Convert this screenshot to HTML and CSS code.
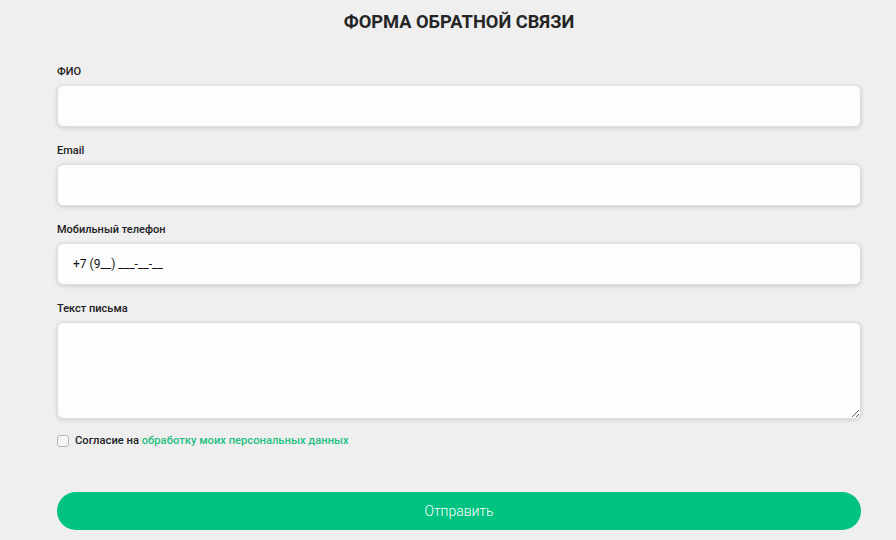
FILE: index.html
```html
<!DOCTYPE html>
<html lang="ru">
<head>
<meta charset="utf-8">
<title>Форма обратной связи</title>
<link rel="stylesheet" href="styles.css">
</head>
<body>
<form class="form">
  <h1 class="title">ФОРМА ОБРАТНОЙ СВЯЗИ</h1>
  <div class="field">
    <label class="label">ФИО</label>
    <input class="input" type="text">
  </div>
  <div class="field">
    <label class="label">Email</label>
    <input class="input" type="text">
  </div>
  <div class="field">
    <label class="label">Мобильный телефон</label>
    <input class="input input-phone" type="text" value="+7 (9__) ___-__-__">
  </div>
  <div class="field">
    <label class="label">Текст письма</label>
    <textarea class="input textarea"></textarea>
  </div>
  <label class="consent">
    <span class="check"></span>
    <span class="consent-text">Согласие на <a class="link" href="#">обработку моих персональных данных</a></span>
  </label>
  <button class="submit" type="button">Отправить</button>
</form>
</body>
</html>
```
FILE: styles.css
```css
html, body {
  margin: 0;
  padding: 0;
  background: #efefef;
  font-family: Roboto, "Liberation Sans", sans-serif;
  color: #222;
}
.form {
  width: 804px;
  margin-left: 57px;
  display: flex;
  flex-direction: column;
}
.title {
  margin: 10px 0 30px;
  font-size: 18.3px;
  line-height: 24px;
  font-weight: 700;
  text-align: center;
  color: #252525;
}
.field {
  display: flex;
  flex-direction: column;
  margin-bottom: 16px;
}
.label {
  font-size: 11px;
  line-height: 16px;
  font-weight: 500;
  color: #222;
  margin-bottom: 5px;
}
.input {
  box-sizing: border-box;
  height: 42px;
  border: 1px solid #dedede;
  border-radius: 6px;
  background: #fdfdfd;
  box-shadow: 0 1px 4px rgba(0,0,0,0.16);
  font-family: Roboto, "Liberation Sans", sans-serif;
  font-size: 12px;
  color: #111;
  padding: 0 15px;
  outline: none;
}
.textarea {
  height: 97px;
  resize: vertical;
  padding: 10px 15px;
}
.field:last-of-type { margin-bottom: 15px; }
.consent {
  display: flex;
  align-items: center;
  gap: 6px;
  font-size: 11.2px;
  line-height: 14px;
  font-weight: 500;
  color: #222;
}
.check {
  box-sizing: border-box;
  width: 12px;
  height: 12px;
  border: 1px solid #b5b5b5;
  border-radius: 3px;
  background: #f7f7f7;
}
.link {
  color: #1fbf83;
  text-decoration: none;
}
.submit {
  margin-top: 44px;
  height: 38px;
  border: none;
  border-radius: 19px;
  background: #00c281;
  color: #fff;
  font-family: Roboto, "Liberation Sans", sans-serif;
  font-size: 14px;
  font-weight: 300;
}
```
